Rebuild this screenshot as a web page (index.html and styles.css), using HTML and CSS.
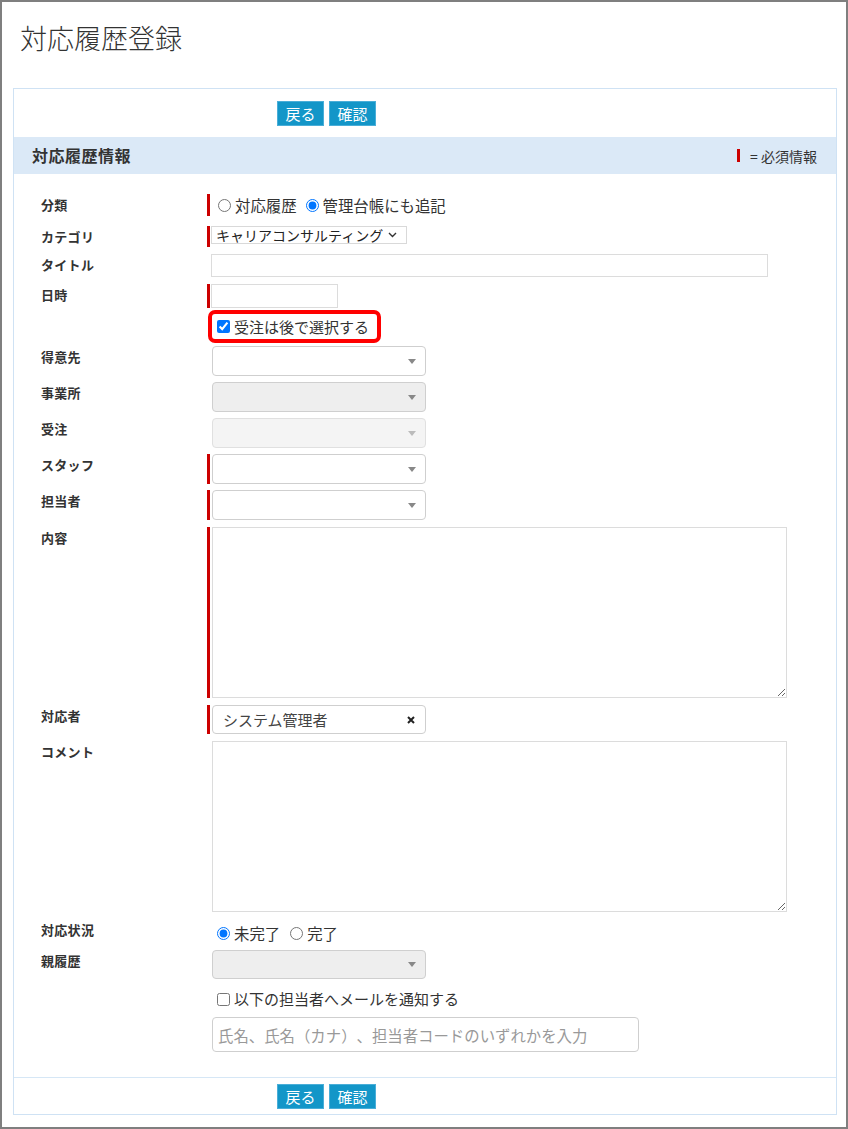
FILE: index.html
```html
<!DOCTYPE html>
<html lang="ja">
<head>
<meta charset="utf-8">
<title>対応履歴登録</title>
<link rel="stylesheet" href="styles.css">
</head>
<body>
<div class="frame">
  <h1 class="page-title">対応履歴登録</h1>

  <div class="panel">
    <div class="toolbar">
      <button type="button" class="btn">戻る</button>
      <button type="button" class="btn">確認</button>
    </div>

    <div class="panel-head">
      <h2 class="panel-title">対応履歴情報</h2>
      <div class="legend"><span class="req-mark"></span>= 必須情報</div>
    </div>

    <form class="form">
      <!-- 分類 -->
      <div class="row mb10">
        <div class="lbl">分類</div>
        <div class="field req radios h22">
          <label class="opt first"><input type="radio" name="kind">対応履歴</label>
          <label class="opt"><input type="radio" name="kind" checked>管理台帳にも追記</label>
        </div>
      </div>

      <!-- カテゴリ -->
      <div class="row mb7">
        <div class="lbl">カテゴリ</div>
        <div class="field req">
          <div class="mini-select">
            <span>キャリアコンサルティング</span>
            <svg class="chev" width="9" height="6" viewBox="0 0 9 6"><path d="M1 1l3.5 3.5L8 1" fill="none" stroke="#333" stroke-width="1.4"/></svg>
          </div>
        </div>
      </div>

      <!-- タイトル -->
      <div class="row mb7">
        <div class="lbl">タイトル</div>
        <div class="field"><input type="text" class="text-input title-input"></div>
      </div>

      <!-- 日時 -->
      <div class="row mb2">
        <div class="lbl">日時</div>
        <div class="field req"><input type="text" class="text-input date-input"></div>
      </div>

      <!-- 受注は後で選択 -->
      <div class="row mb3">
        <div class="lbl"></div>
        <div class="field tight">
          <label class="highlight"><input type="checkbox" checked>受注は後で選択する</label>
        </div>
      </div>

      <!-- 得意先 -->
      <div class="row">
        <div class="lbl">得意先</div>
        <div class="field">
          <div class="s2"><svg class="arrow" width="8" height="5" viewBox="0 0 8 5"><path d="M0 0h8L4 5z" fill="#888"/></svg></div>
        </div>
      </div>

      <!-- 事業所 -->
      <div class="row">
        <div class="lbl">事業所</div>
        <div class="field">
          <div class="s2 disabled"><svg class="arrow" width="8" height="5" viewBox="0 0 8 5"><path d="M0 0h8L4 5z" fill="#888"/></svg></div>
        </div>
      </div>

      <!-- 受注 -->
      <div class="row">
        <div class="lbl">受注</div>
        <div class="field">
          <div class="s2 readonly"><svg class="arrow" width="8" height="5" viewBox="0 0 8 5"><path d="M0 0h8L4 5z" fill="#bbb"/></svg></div>
        </div>
      </div>

      <!-- スタッフ -->
      <div class="row">
        <div class="lbl">スタッフ</div>
        <div class="field req">
          <div class="s2"><svg class="arrow" width="8" height="5" viewBox="0 0 8 5"><path d="M0 0h8L4 5z" fill="#888"/></svg></div>
        </div>
      </div>

      <!-- 担当者 -->
      <div class="row mb7">
        <div class="lbl">担当者</div>
        <div class="field req">
          <div class="s2"><svg class="arrow" width="8" height="5" viewBox="0 0 8 5"><path d="M0 0h8L4 5z" fill="#888"/></svg></div>
        </div>
      </div>

      <!-- 内容 -->
      <div class="row mb7">
        <div class="lbl">内容</div>
        <div class="field req"><textarea class="area"></textarea></div>
      </div>

      <!-- 対応者 -->
      <div class="row mb7">
        <div class="lbl">対応者</div>
        <div class="field req">
          <div class="s2 chosen">
            <span class="chosen-text">システム管理者</span>
            <svg class="clear" width="8" height="8" viewBox="0 0 8 8"><path d="M1 1L7 7M7 1L1 7" stroke="#222" stroke-width="2"/></svg>
          </div>
        </div>
      </div>

      <!-- コメント -->
      <div class="row mb7">
        <div class="lbl">コメント</div>
        <div class="field"><textarea class="area"></textarea></div>
      </div>

      <!-- 対応状況 -->
      <div class="row mb7">
        <div class="lbl">対応状況</div>
        <div class="field radios h24 status">
          <label class="opt first"><input type="radio" name="status" checked>未完了</label>
          <label class="opt"><input type="radio" name="status">完了</label>
        </div>
      </div>

      <!-- 親履歴 -->
      <div class="row">
        <div class="lbl">親履歴</div>
        <div class="field">
          <div class="s2 disabled short"><svg class="arrow" width="8" height="5" viewBox="0 0 8 5"><path d="M0 0h8L4 5z" fill="#888"/></svg></div>
        </div>
      </div>

      <!-- メール通知 -->
      <div class="row mb4">
        <div class="lbl"></div>
        <div class="field notify">
          <label class="opt first"><input type="checkbox">以下の担当者へメールを通知する</label>
        </div>
      </div>

      <div class="row mb0">
        <div class="lbl"></div>
        <div class="field">
          <input type="text" class="search-input" placeholder="氏名、氏名（カナ）、担当者コードのいずれかを入力">
        </div>
      </div>
    </form>

    <div class="footer">
      <button type="button" class="btn">戻る</button>
      <button type="button" class="btn">確認</button>
    </div>
  </div>
</div>
</body>
</html>
```

FILE: styles.css
```css
* {
  box-sizing: border-box;
}

html,
body {
  margin: 0;
  padding: 0;
  background: #fff;
}

body {
  font-family: "Noto Sans CJK JP", "Noto Sans", sans-serif;
  color: #333;
  text-spacing-trim: space-all;
}

/* outer window frame */
.frame {
  width: 848px;
  height: 1129px;
  border: 2px solid #7f7f7f;
  overflow: hidden;
}

.page-title {
  margin: 20px 0 34px 18px;
  font-size: 27px;
  line-height: 32px;
  font-weight: 300;
  color: #333;
}

.panel {
  margin: 0 9px 0 11px;
  border: 1px solid #cfe2f4;
}

/* button bars */
.toolbar {
  display: flex;
  gap: 5px;
  height: 48px;
  padding: 12px 0 0 263px;
}

.footer {
  display: flex;
  gap: 5px;
  border-top: 1px solid #d6e7f6;
  padding: 6px 0 5px 263px;
}

.btn {
  width: 47px;
  height: 25px;
  padding: 0;
  border: 1px solid #4aaed8;
  background: #1396c8;
  color: #fff;
  font-family: inherit;
  font-size: 15px;
  line-height: 21px;
  cursor: pointer;
}

/* section header */
.panel-head {
  display: flex;
  align-items: center;
  justify-content: space-between;
  height: 37px;
  padding: 0 19px 0 18px;
  background: #dbe9f7;
}

.panel-title {
  margin: 0;
  font-size: 16px;
  line-height: 37px;
  font-weight: bold;
  letter-spacing: 0.5px;
  color: #333;
}

.legend {
  display: flex;
  align-items: center;
  font-size: 14px;
  line-height: 20px;
  color: #333;
}

.req-mark {
  display: inline-block;
  width: 3px;
  height: 13px;
  background: #cc0000;
  margin-right: 10px;
}

/* form body */
.form {
  padding: 20px 0 25px 27px;
}

.row {
  display: grid;
  grid-template-columns: 166px 1fr;
  margin-bottom: 6px;
}

.mb0 { margin-bottom: 0; }
.mb2 { margin-bottom: 2px; }
.mb3 { margin-bottom: 3px; }
.mb4 { margin-bottom: 4px; }
.mb7 { margin-bottom: 7px; }
.mb10 { margin-bottom: 10px; }

.lbl {
  font-size: 13px;
  line-height: 21px;
  font-weight: bold;
  letter-spacing: 0.3px;
  color: #333;
}

.field {
  display: flex;
  align-items: flex-start;
  padding-left: 4px;
}

.field.req {
  border-left: 3px solid #cc0000;
  padding-left: 1px;
  justify-self: start;
}

.field.tight {
  padding-left: 1px;
}

.h22 { height: 22px; }
.h24 { height: 24px; }

.radios {
  align-items: center;
}

.status {
  padding-top: 4px;
}

.notify {
  height: 28px;
  align-items: center;
}

.opt {
  display: inline-flex;
  align-items: center;
  font-size: 15px;
  line-height: 20px;
  color: #333;
  margin-left: 9px;
}

.radios .opt {
  font-size: 15.4px;
}

.opt.first {
  margin-left: 6px;
}

.radios.req .opt.first {
  margin-left: 7px;
}

.opt input {
  width: 13px;
  height: 13px;
  margin: 0 4px 0 0;
}

.status .opt + .opt {
  margin-left: 10px;
}

/* small native-like select */
.mini-select {
  display: flex;
  align-items: center;
  justify-content: space-between;
  width: 196px;
  height: 18px;
  border: 1px solid #d9d9d9;
  padding: 0 9px 0 4px;
  font-size: 14px;
  line-height: 16px;
  color: #222;
  white-space: nowrap;
}

.chev {
  flex: none;
}

.text-input {
  display: block;
  margin: 0;
  border: 1px solid #dcdcdc;
  background: #fff;
  font-family: inherit;
  font-size: 14px;
  padding: 0 4px;
}

.title-input {
  width: 557px;
  height: 23px;
}

.date-input {
  width: 127px;
  height: 24px;
}

/* highlighted checkbox */
.highlight {
  display: inline-flex;
  align-items: center;
  height: 33px;
  border: 4px solid #ff0000;
  border-radius: 7px;
  padding: 0 8px 0 5px;
  font-size: 15px;
  line-height: 20px;
  color: #333;
}

.highlight input {
  width: 13px;
  height: 13px;
  margin: 0 4px 0 0;
}

/* select2-style boxes */
.s2 {
  display: flex;
  align-items: center;
  justify-content: flex-end;
  width: 214px;
  height: 30px;
  margin-left: 1px;
  border: 1px solid #cfcfcf;
  border-radius: 4px;
  background: #fff;
  padding-right: 9px;
}

.s2.short {
  height: 29px;
}

.s2.disabled {
  background: #eeeeee;
}

.s2.readonly {
  background: #f4f4f4;
  border-color: #e0e0e0;
}

.s2.chosen {
  justify-content: space-between;
  height: 29px;
  padding: 0 10px 0 10px;
}

.chosen-text {
  font-size: 15px;
  line-height: 20px;
  color: #444;
}

.area {
  display: block;
  width: 575px;
  height: 171px;
  margin: 0 0 0 1px;
  border: 1px solid #dcdcdc;
  font-family: inherit;
  font-size: 14px;
}

.search-input {
  display: block;
  width: 427px;
  height: 35px;
  margin: 0 0 0 1px;
  border: 1px solid #cfcfcf;
  border-radius: 4px;
  padding: 0 5px;
  font-family: inherit;
  font-size: 15.4px;
  color: #333;
  text-spacing-trim: space-all;
}

.search-input::placeholder {
  color: #999;
}
```
